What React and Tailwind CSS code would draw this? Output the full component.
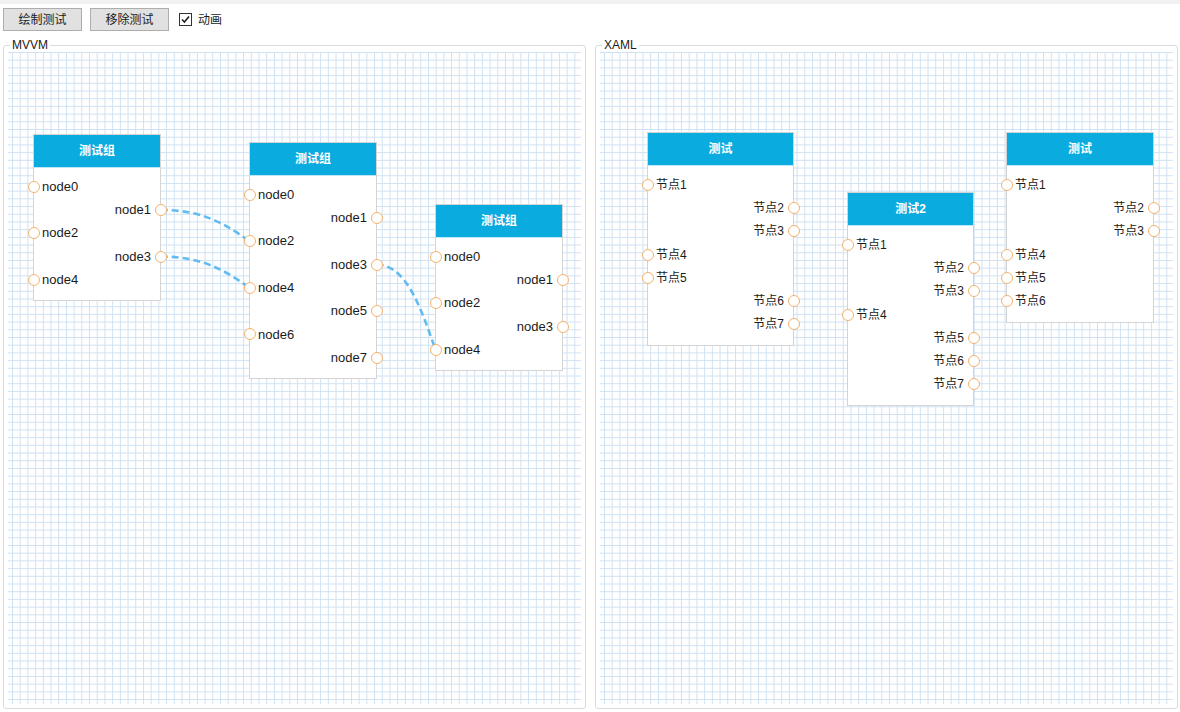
import React from "react";

const FONT = { fontFamily: '"Liberation Sans", "Noto Sans CJK SC", sans-serif' };

const HEADER_H = 33;
const PAD_TOP = 7;
const ROW_H = 23.3;

// canvas-relative node layout
const mvvmNodes = [
  {
    id: "a",
    x: 25,
    y: 82,
    w: 128,
    title: "测试组",
    ports: [["L", "node0"], ["R", "node1"], ["L", "node2"], ["R", "node3"], ["L", "node4"]],
  },
  {
    id: "b",
    x: 241,
    y: 90,
    w: 128,
    title: "测试组",
    ports: [
      ["L", "node0"], ["R", "node1"], ["L", "node2"], ["R", "node3"],
      ["L", "node4"], ["R", "node5"], ["L", "node6"], ["R", "node7"],
    ],
  },
  {
    id: "c",
    x: 427,
    y: 152,
    w: 128,
    title: "测试组",
    ports: [["L", "node0"], ["R", "node1"], ["L", "node2"], ["R", "node3"], ["L", "node4"]],
  },
];

const xamlNodes = [
  {
    id: "d",
    x: 47,
    y: 80,
    w: 147,
    title: "测试",
    ports: [["L", "节点1"], ["R", "节点2"], ["R", "节点3"], ["L", "节点4"], ["L", "节点5"], ["R", "节点6"], ["R", "节点7"]],
  },
  {
    id: "e",
    x: 247,
    y: 140,
    w: 127,
    title: "测试2",
    ports: [["L", "节点1"], ["R", "节点2"], ["R", "节点3"], ["L", "节点4"], ["R", "节点5"], ["R", "节点6"], ["R", "节点7"]],
  },
  {
    id: "f",
    x: 406,
    y: 80,
    w: 148,
    title: "测试",
    ports: [["L", "节点1"], ["R", "节点2"], ["R", "节点3"], ["L", "节点4"], ["L", "节点5"], ["L", "节点6"]],
  },
];

const edges = [
  ["a", 1, "b", 2],
  ["a", 3, "b", 4],
  ["b", 3, "c", 4],
];

const portPoint = (node, i, side) => ({
  x: side === "R" ? node.x + node.w - 0.5 : node.x + 0.5,
  y: node.y + 1 + HEADER_H + PAD_TOP + (i + 0.5) * ROW_H,
});

function Edges({ nodes }) {
  const byId = Object.fromEntries(nodes.map((n) => [n.id, n]));
  return (
    <svg className="absolute inset-0 w-full h-full pointer-events-none">
      {edges.map(([from, fi, to, ti], k) => {
        const s = portPoint(byId[from], fi, "R");
        const e = portPoint(byId[to], ti, "L");
        const dx = e.x - s.x;
        const dy = e.y - s.y;
        const c1 = `${s.x + dx / 2} ${s.y}`;
        const c2 = `${e.x - dx / 4} ${e.y - dy / 2}`;
        return (
          <path
            key={k}
            d={`M ${s.x} ${s.y} C ${c1}, ${c2}, ${e.x} ${e.y}`}
            fill="none"
            stroke="#62bcef"
            strokeWidth="2.6"
            strokeDasharray="7 4"
          />
        );
      })}
    </svg>
  );
}

function Port({ side }) {
  return (
    <span
      className={
        "absolute top-1/2 -translate-y-1/2 w-[12px] h-[12px] rounded-full border-[1.5px] border-[#f4b26c] bg-white " +
        (side === "R" ? "right-[-6.5px]" : "left-[-6.5px]")
      }
    />
  );
}

function Node({ node, textSize }) {
  return (
    <div
      className="absolute bg-white border border-[#d4d4d4]"
      style={{ left: node.x, top: node.y, width: node.w }}
    >
      <div className="h-[33px] bg-[#0aabdf] border-b border-[#bfe6f6] flex items-center justify-center text-white text-[12px] font-bold">
        {node.title}
      </div>
      <div className="pt-[7px] pb-[9px]">
        {node.ports.map(([side, label], i) => (
          <div
            key={i}
            className={
              "relative h-[23.3px] flex items-center text-[#1b1b1b] " +
              textSize +
              (side === "R" ? " justify-end pr-[9px]" : " pl-[8px]")
            }
          >
            <Port side={side} />
            <span>{label}</span>
          </div>
        ))}
      </div>
    </div>
  );
}

function GroupBox({ title, children }) {
  return (
    <div className="relative w-[583px] h-[664px] border border-[#d5dce2] rounded-[3px] pt-[6px] px-[4px] pb-[4px]">
      <span className="absolute left-[6px] top-[-8px] bg-white px-[2px] text-[12px] leading-[14px] text-[#1b1b1b]">
        {title}
      </span>
      <div className="relative w-full h-full overflow-hidden bg-white bg-[image:linear-gradient(to_right,#cfe1f2_1px,transparent_1px),linear-gradient(to_bottom,#cfe1f2_1px,transparent_1px)] bg-[size:7.71px_7.71px] bg-[position:4px_0px]">
        {children}
      </div>
    </div>
  );
}

export default function App() {
  return (
    <div className="w-[1180px] h-[712px] bg-white overflow-hidden" style={FONT}>
      <div className="h-[4px] bg-[#f1f1f4]" />
      {/* toolbar */}
      <div className="flex items-start pt-[4px] pl-[3px]">
        <button className="w-[79px] h-[23px] bg-[#e1e1e1] border border-[#adadad] text-[12px] text-[#1b1b1b]">
          绘制测试
        </button>
        <button className="ml-[8px] w-[79px] h-[23px] bg-[#e1e1e1] border border-[#adadad] text-[12px] text-[#1b1b1b]">
          移除测试
        </button>
        <label className="ml-[10px] h-[23px] flex items-center gap-[6px] text-[12px] text-[#1b1b1b]">
          <span className="w-[13px] h-[13px] border border-[#333] bg-white flex items-center justify-center">
            <svg width="9" height="9" viewBox="0 0 9 9">
              <path d="M1 4.5 L3.4 7 L8 1.5" fill="none" stroke="#222" strokeWidth="1.6" />
            </svg>
          </span>
          动画
        </label>
      </div>
      <div className="flex gap-[9px] pl-[3px] mt-[14px]">
        <GroupBox title="MVVM">
          <Edges nodes={mvvmNodes} />
          {mvvmNodes.map((n) => (
            <Node key={n.id} node={n} textSize="text-[13px]" />
          ))}
        </GroupBox>
        <GroupBox title="XAML">
          {xamlNodes.map((n) => (
            <Node key={n.id} node={n} textSize="text-[12px]" />
          ))}
        </GroupBox>
      </div>
    </div>
  );
}
